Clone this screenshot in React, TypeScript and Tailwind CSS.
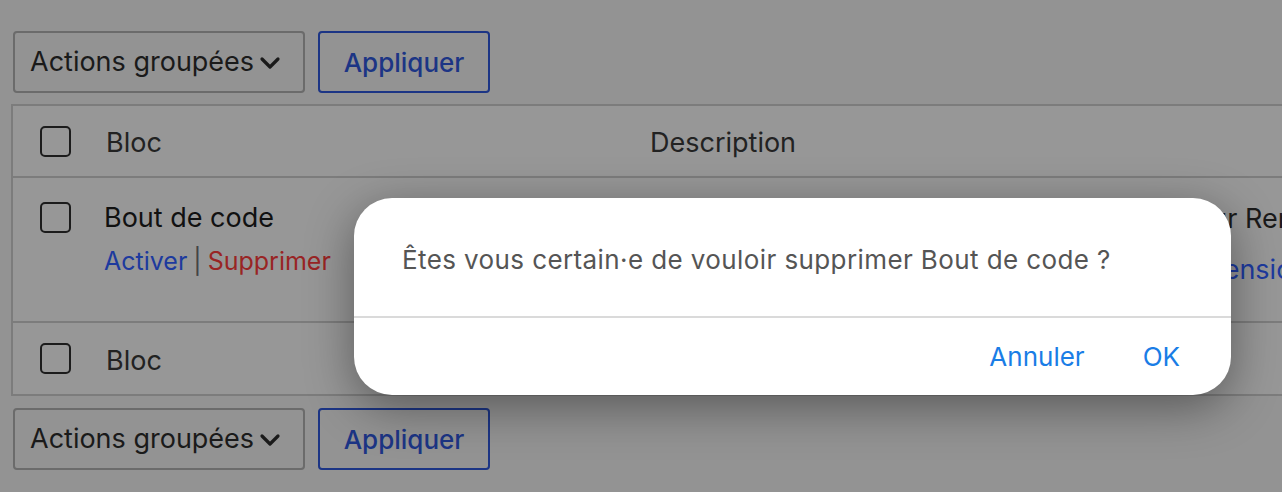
import React from "react";

function Checkbox() {
  return <div className="h-[31px] w-[31px] shrink-0 rounded-[5px] border-2 border-[#1c1c1c]" />;
}

function BulkBar() {
  return (
    <div className="flex h-[62px] gap-[13px]">
      <div className="flex w-[292px] items-center rounded-[4px] border-2 border-[#6b6b6b] pl-[15px] text-[27px] text-[#1a1a1a]">
        <span>Actions groupées</span>
        <svg className="ml-[5px] mt-[2px]" width="22" height="14" viewBox="0 0 22 14" fill="none">
          <path d="M3 3 11 11 19 3" stroke="#1a1a1a" strokeWidth="3.2" strokeLinecap="round" strokeLinejoin="round" />
        </svg>
      </div>
      <div className="flex w-[172px] items-center justify-center rounded-[4px] border-2 border-[#1c3585] text-[26px] font-medium text-[#1c3585]">
        Appliquer
      </div>
    </div>
  );
}

export default function App() {
  return (
    <div className="relative h-[492px] w-[1282px] overflow-hidden bg-[#939393] font-['Inter',sans-serif]">
      <div className="pl-[13px] pt-[31px]">
        <BulkBar />
      </div>

      <div className="ml-[11px] mt-[11px] w-[1400px] border-2 border-[#7c7c7c] bg-[#979797] text-[27px]">
        <div className="flex h-[72px] items-center border-b-2 border-[#7c7c7c] pl-[27px] text-[#222]">
          <Checkbox />
          <span className="ml-[35px] w-[544px] pt-[5px]">Bloc</span>
          <span className="pt-[5px]">Description</span>
        </div>

        <div className="flex h-[145px] border-b-2 border-[#7c7c7c] pl-[27px] pt-[24px]">
          <Checkbox />
          <div className="ml-[33px] w-[1070px]">
            <div className="leading-[32px] text-[#111]">Bout de code</div>
            <div className="mt-[11px] text-[25px] leading-[32px]">
              <span className="text-[#1d3a9e]">Activer</span>
              <span className="mx-[6px] text-[#444]">|</span>
              <span className="text-[#992424]">Supprimer</span>
            </div>
          </div>
          <div className="pt-[1px]">
            <div className="pl-[4px] leading-[32px] text-[#1a1a1a]">Pour Rendre</div>
            <div className="mt-[19px] leading-[32px] text-[#1d3a9e]">Dimensions</div>
          </div>
        </div>

        <div className="flex h-[71px] items-center pl-[27px] text-[#222]">
          <Checkbox />
          <span className="ml-[35px] pt-[5px]">Bloc</span>
        </div>
      </div>

      <div className="pl-[13px] pt-[12px]">
        <BulkBar />
      </div>

      <div className="absolute left-[354px] top-[198px] flex h-[197px] w-[877px] flex-col overflow-hidden rounded-[38px] bg-white shadow-[0_12px_48px_rgba(0,0,0,0.4)]">
        <div className="flex h-[118px] items-start pl-[48px] pt-[45px] text-[26px] leading-[34px] tracking-[0.4px] text-[#555]">
          Êtes vous certain·e de vouloir supprimer Bout de code ?
        </div>
        <div className="h-[2px] bg-[#dadada]" />
        <div className="flex flex-1 items-center justify-end gap-[58px] pr-[51px] text-[26px] text-[#1a7de6]">
          <span>Annuler</span>
          <span>OK</span>
        </div>
      </div>
    </div>
  );
}
